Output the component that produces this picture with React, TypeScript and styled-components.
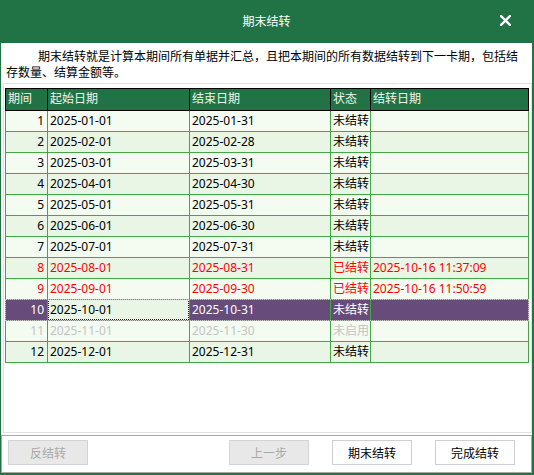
import React from "react";
import styled, { createGlobalStyle, css } from "styled-components";

const GlobalStyle = createGlobalStyle`
  html, body { margin: 0; padding: 0; background: #fff; }
  body { font-family: "Noto Sans", "Noto Sans CJK SC", sans-serif; font-size: 12px; }
  * { box-sizing: border-box; }
`;

const GREEN = "#217346";
const LINE = "#43a843";

const Window = styled.div`
  width: 534px;
  height: 475px;
  background: ${GREEN};
  padding: 0 2px 2px 1px;
  display: flex;
  flex-direction: column;
`;

const TitleBar = styled.div`
  height: 43px;
  display: grid;
  grid-template-columns: 1fr auto 1fr;
  align-items: center;
  color: #fff;
  font-size: 12px;
  padding-bottom: 2px;
`;

const Title = styled.div`
  grid-column: 2;
  font-family: "Noto Sans CJK SC", sans-serif;
`;

const CloseButton = styled.div`
  grid-column: 3;
  justify-self: end;
  margin-right: 21px;
  width: 12px;
  height: 12px;
  display: flex;
  align-items: center;
  justify-content: center;
`;

const Body = styled.div`
  flex: 1;
  background: #fff;
  display: flex;
  flex-direction: column;
`;

const Description = styled.p`
  margin: 0;
  padding: 5px 10px 0 5px;
  font-family: "Noto Sans CJK SC", sans-serif;
  font-size: 12px;
  line-height: 16px;
  text-indent: 32px;
  color: #000;
`;

const GridPanel = styled.div`
  margin: 3px 0 0 2px;
  height: 350px;
  border: 1px solid #e2e2e2;
  padding: 4px 0 0 1px;
`;

const COLS = "42px 142px 141px 40px 158px";

const Row = styled.div<{ $header?: boolean; $even?: boolean; $selected?: boolean }>`
  position: relative;
  display: grid;
  grid-template-columns: ${COLS};
  width: 524px;
  border-left: 1px solid ${(p) => (p.$header ? "#000" : LINE)};
  ${(p) =>
    p.$header
      ? css`
          border-top: 1px solid #000;
          background: ${GREEN};
          color: #eef5ea;
          height: 23px;
        `
      : css`
          background: ${p.$even ? "#e9f6e5" : "#f4fbf1"};
          height: 21px;
        `}
  ${(p) =>
    p.$selected &&
    css`
      background: #674b7b;
      color: #fff;
      &::after {
        content: "";
        position: absolute;
        left: -1px;
        right: 0;
        top: -1px;
        bottom: 0;
        border: 1px dotted #c8c8c8;
        pointer-events: none;
      }
    `}
`;

type Tone = "normal" | "red" | "gray" | "white";

const Cell = styled.div<{ $header?: boolean; $right?: boolean; $tone?: Tone; $focused?: boolean }>`
  border-right: 1px solid ${(p) => (p.$header ? "#000" : LINE)};
  border-bottom: 1px solid ${(p) => (p.$header ? "#000" : LINE)};
  padding: 0 ${(p) => (p.$right ? "3px" : "1px")} 0 2px;
  line-height: 20px;
  font-size: 12px;
  white-space: nowrap;
  overflow: visible;
  text-align: ${(p) => (p.$right ? "right" : "left")};
  color: ${(p) =>
    p.$tone === "red" ? "#ff0000" : p.$tone === "gray" ? "#c4c4c4" : p.$tone === "white" ? "#fff" : "inherit"};
  font-family: "Noto Sans", "Noto Sans CJK SC", sans-serif;
  ${(p) =>
    p.$focused &&
    css`
      position: relative;
      background: #e9f6e5;
      color: #000;
      &::before {
        content: "";
        position: absolute;
        inset: -1px 0 0 0;
        border: 1px dotted #222;
      }
    `}
`;

const BottomBar = styled.div`
  margin-top: 2px;
  height: 38px;
  border: 1px solid #a8a8a8;
  padding: 4px 16px 0 6px;
  display: flex;
  align-items: flex-start;
`;

const ButtonGroup = styled.div`
  margin-left: auto;
  display: flex;
  gap: 23px;
`;

const Button = styled.button<{ $disabled?: boolean }>`
  width: 80px;
  height: 25px;
  padding: 0;
  font-family: "Noto Sans CJK SC", sans-serif;
  font-size: 12px;
  border: 1px solid ${(p) => (p.$disabled ? "#d4d4d4" : "#d0d0d0")};
  background: ${(p) => (p.$disabled ? "#e8e8e8" : "#fff")};
  color: ${(p) => (p.$disabled ? "#a9a9a9" : "#000")};
  cursor: default;
`;

type Period = {
  no: number;
  start: string;
  end: string;
  status: string;
  date: string;
  tone: Tone;
};

const rows: Period[] = [
  { no: 1, start: "2025-01-01", end: "2025-01-31", status: "未结转", date: "", tone: "normal" },
  { no: 2, start: "2025-02-01", end: "2025-02-28", status: "未结转", date: "", tone: "normal" },
  { no: 3, start: "2025-03-01", end: "2025-03-31", status: "未结转", date: "", tone: "normal" },
  { no: 4, start: "2025-04-01", end: "2025-04-30", status: "未结转", date: "", tone: "normal" },
  { no: 5, start: "2025-05-01", end: "2025-05-31", status: "未结转", date: "", tone: "normal" },
  { no: 6, start: "2025-06-01", end: "2025-06-30", status: "未结转", date: "", tone: "normal" },
  { no: 7, start: "2025-07-01", end: "2025-07-31", status: "未结转", date: "", tone: "normal" },
  { no: 8, start: "2025-08-01", end: "2025-08-31", status: "已结转", date: "2025-10-16 11:37:09", tone: "red" },
  { no: 9, start: "2025-09-01", end: "2025-09-30", status: "已结转", date: "2025-10-16 11:50:59", tone: "red" },
  { no: 10, start: "2025-10-01", end: "2025-10-31", status: "未结转", date: "", tone: "white" },
  { no: 11, start: "2025-11-01", end: "2025-11-30", status: "未启用", date: "", tone: "gray" },
  { no: 12, start: "2025-12-01", end: "2025-12-31", status: "未结转", date: "", tone: "normal" },
];

const CloseIcon = () => (
  <svg width="11" height="11" viewBox="0 0 11 11">
    <path d="M1 1 L10 10 M10 1 L1 10" stroke="#fff" strokeWidth="2.4" strokeLinecap="square" />
  </svg>
);

export default function App() {
  return (
    <>
      <GlobalStyle />
      <Window>
        <TitleBar>
          <Title>期末结转</Title>
          <CloseButton>
            <CloseIcon />
          </CloseButton>
        </TitleBar>
        <Body>
          <Description>
            期末结转就是计算本期间所有单据并汇总，且把本期间的所有数据结转到下一卡期，包括结存数量、结算金额等。
          </Description>
          <GridPanel>
            <Row $header>
              <Cell $header>期间</Cell>
              <Cell $header>起始日期</Cell>
              <Cell $header>结束日期</Cell>
              <Cell $header>状态</Cell>
              <Cell $header>结转日期</Cell>
            </Row>
            {rows.map((r) => {
              const selected = r.no === 10;
              return (
                <Row key={r.no} $even={r.no % 2 === 0} $selected={selected}>
                  <Cell $right $tone={r.tone}>{r.no}</Cell>
                  <Cell $tone={r.tone} $focused={selected}>{r.start}</Cell>
                  <Cell $tone={r.tone}>{r.end}</Cell>
                  <Cell $tone={r.tone}>{r.status}</Cell>
                  <Cell $tone={r.tone}>{r.date}</Cell>
                </Row>
              );
            })}
          </GridPanel>
          <BottomBar>
            <Button $disabled>反结转</Button>
            <ButtonGroup>
              <Button $disabled>上一步</Button>
              <Button>期末结转</Button>
              <Button>完成结转</Button>
            </ButtonGroup>
          </BottomBar>
        </Body>
      </Window>
    </>
  );
}
